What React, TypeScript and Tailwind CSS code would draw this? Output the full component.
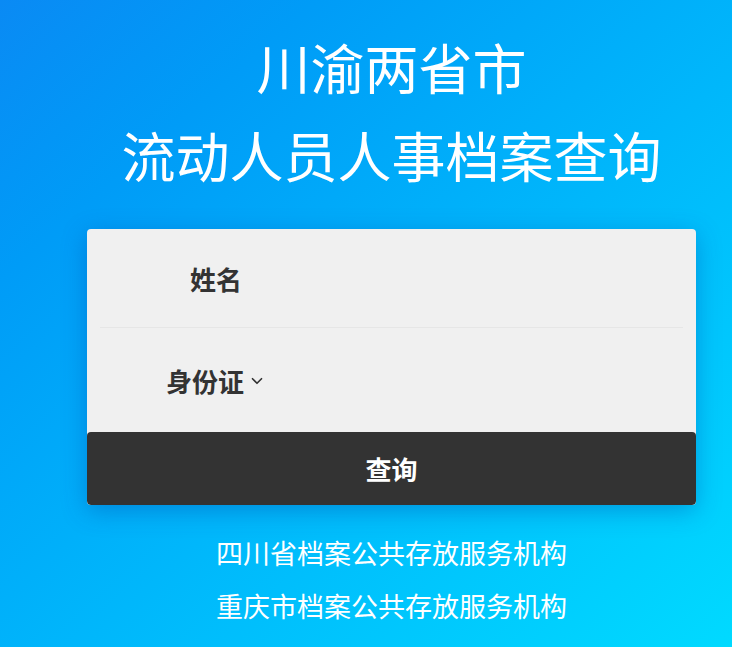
import { ChevronDown } from "lucide-react";

export default function App() {
  return (
    <div
      className="w-[732px] h-[647px] overflow-hidden bg-gradient-to-br from-[#0a8af4] to-[#00daff] text-white"
      style={{ fontFamily: '"Noto Sans CJK SC", "Noto Sans", sans-serif' }}
    >
      <div className="w-[609px] ml-[87px] flex flex-col items-center">
        <h1 className="mt-[34px] text-[54px] leading-[66px] font-normal">川渝两省市</h1>
        <h1 className="mt-[22px] text-[54px] leading-[66px] font-normal">流动人员人事档案查询</h1>

        <div className="mt-[41px] w-full rounded-[4px] bg-[#f0f0f0] shadow-[0_6px_24px_rgba(0,60,160,0.35)] overflow-hidden">
          <div className="px-[13px]">
            <div className="h-[99px] flex items-center border-b border-[#e6e6e6]">
              <div className="w-[232px] text-center text-[26px] font-bold text-[#333]">姓名</div>
              <input className="flex-1 h-full bg-transparent outline-none" />
            </div>
            <div className="h-[104px] flex items-center">
              <div className="w-[232px] flex items-center justify-center gap-[4px] text-[26px] font-bold text-[#333]">
                <span>身份证</span>
                <ChevronDown size={18} strokeWidth={2.2} className="mt-[2px]" />
              </div>
              <input className="flex-1 h-full bg-transparent outline-none" />
            </div>
          </div>
          <button className="w-full h-[73px] rounded-[4px] bg-[#333333] text-[26px] font-bold text-white">
            查询
          </button>
        </div>

        <div className="mt-[31px] text-[27px] leading-[34px]">四川省档案公共存放服务机构</div>
        <div className="mt-[19px] text-[27px] leading-[34px]">重庆市档案公共存放服务机构</div>
      </div>
    </div>
  );
}
